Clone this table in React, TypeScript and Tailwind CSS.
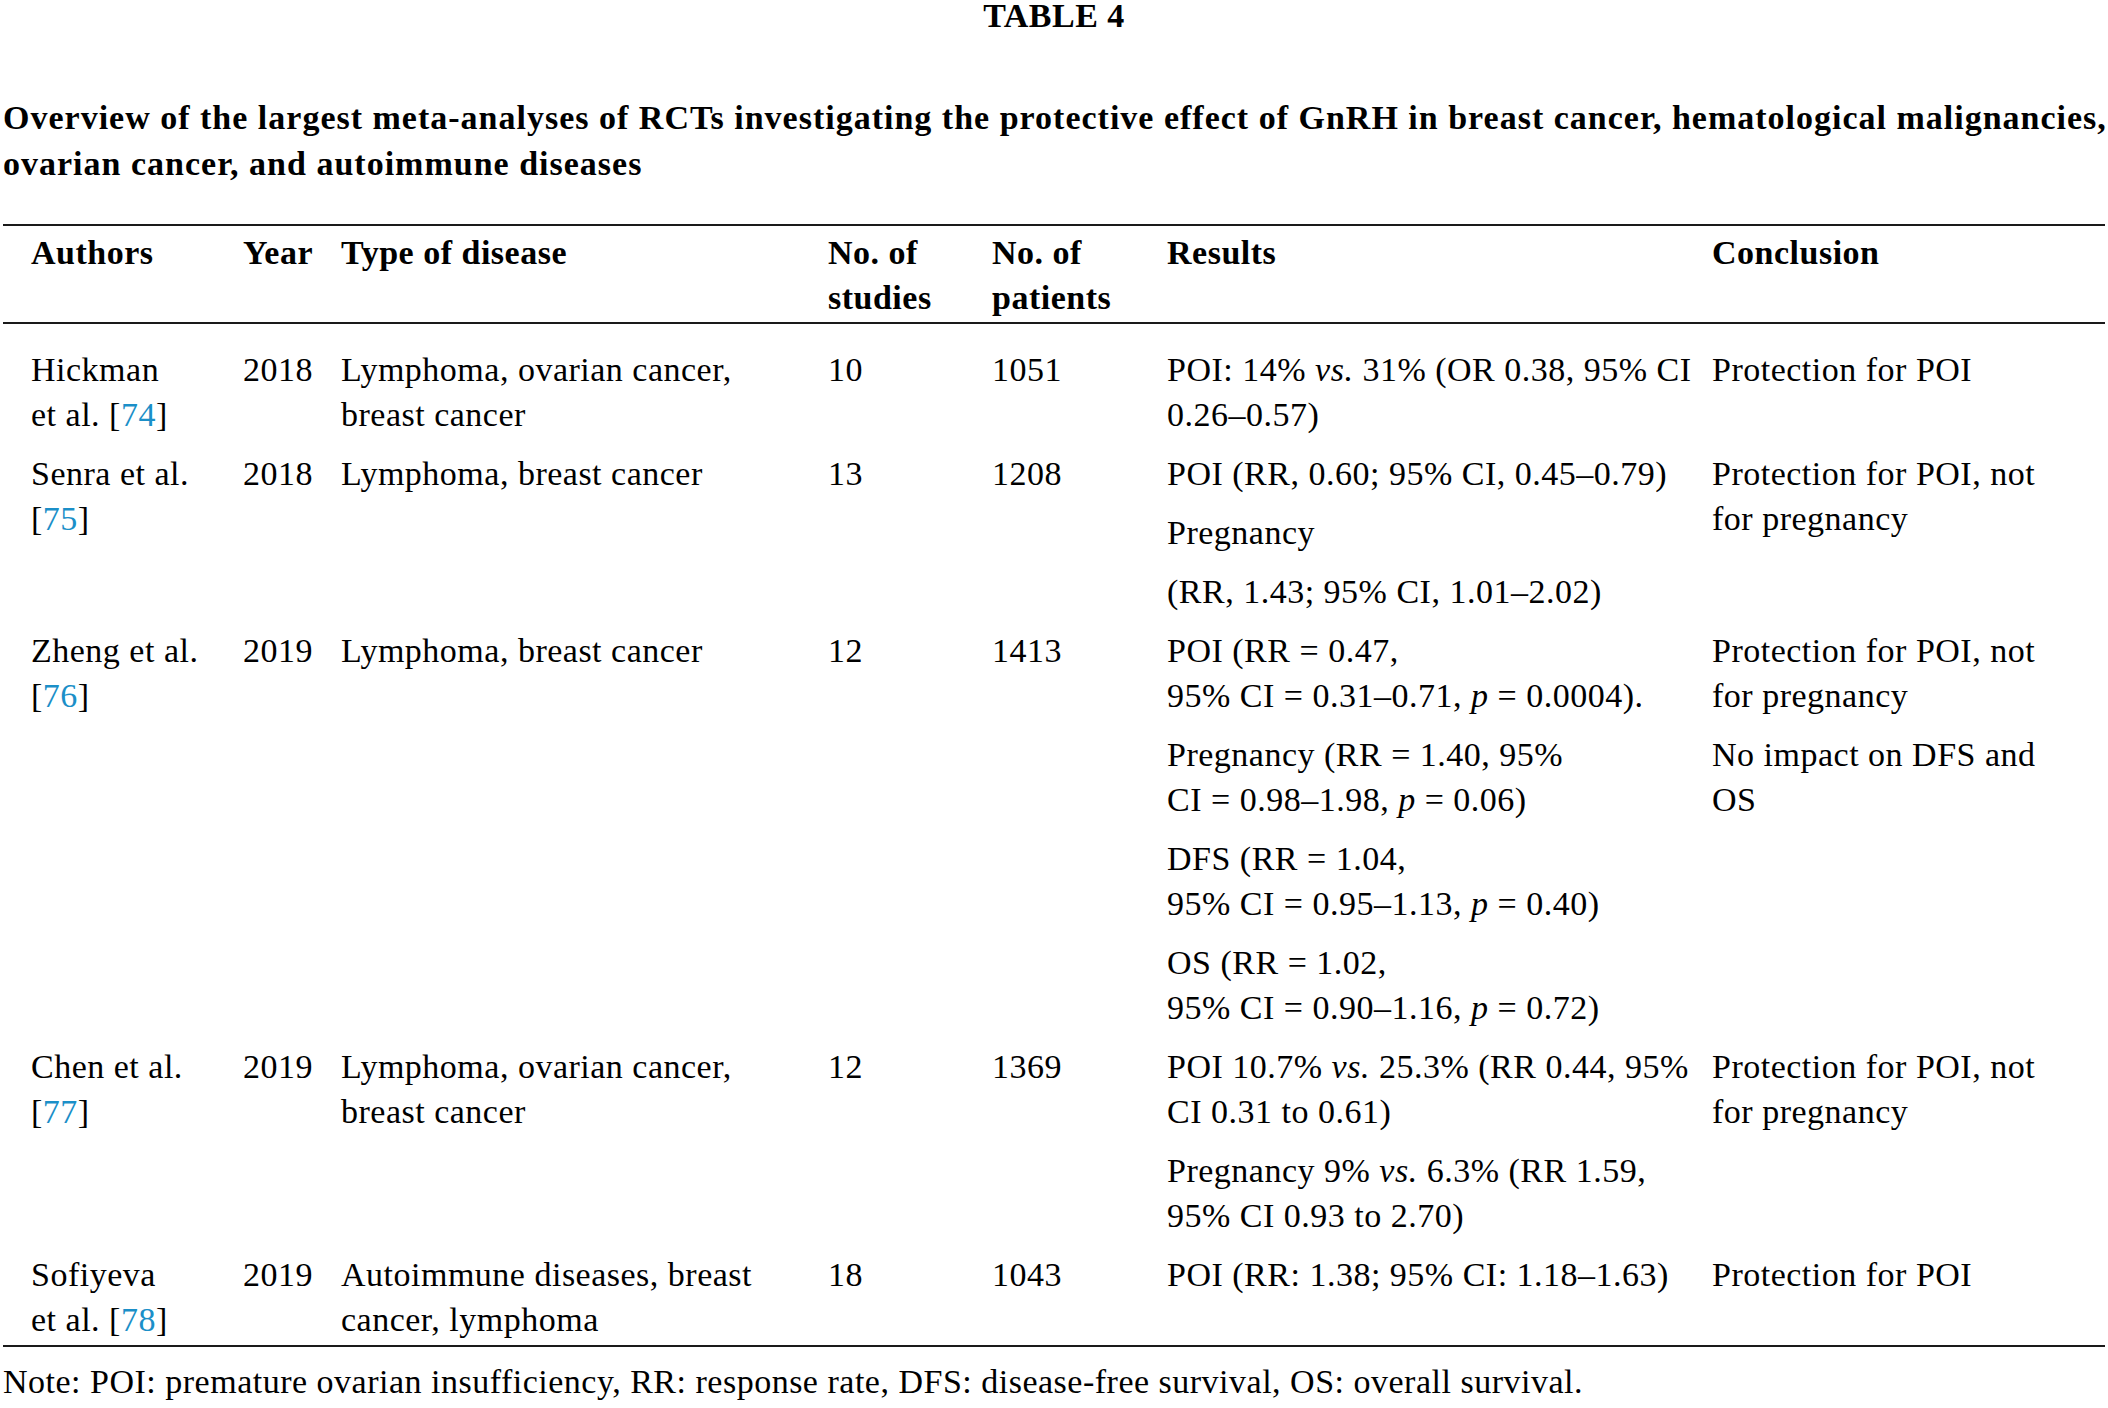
import React from 'react';

type Row = {
  author: React.ReactNode;
  year: string;
  disease: React.ReactNode;
  studies: string;
  patients: string;
  results: React.ReactNode[];
  conclusion: React.ReactNode[];
};

const Ref = ({ n }: { n: number }) => (
  <>
    [<span className="text-[#1b8fc8]">{n}</span>]
  </>
);

const rows: Row[] = [
  {
    author: (
      <>
        Hickman
        <br />
        et al. <Ref n={74} />
      </>
    ),
    year: '2018',
    disease: (
      <>
        Lymphoma, ovarian cancer,
        <br />
        breast cancer
      </>
    ),
    studies: '10',
    patients: '1051',
    results: [
      <>
        POI: 14% <i>vs.</i> 31% (OR 0.38, 95% CI
        <br />
        0.26–0.57)
      </>,
    ],
    conclusion: ['Protection for POI'],
  },
  {
    author: (
      <>
        Senra et al.
        <br />
        <Ref n={75} />
      </>
    ),
    year: '2018',
    disease: 'Lymphoma, breast cancer',
    studies: '13',
    patients: '1208',
    results: ['POI (RR, 0.60; 95% CI, 0.45–0.79)', 'Pregnancy', '(RR, 1.43; 95% CI, 1.01–2.02)'],
    conclusion: [
      <>
        Protection for POI, not
        <br />
        for pregnancy
      </>,
    ],
  },
  {
    author: (
      <>
        Zheng et al.
        <br />
        <Ref n={76} />
      </>
    ),
    year: '2019',
    disease: 'Lymphoma, breast cancer',
    studies: '12',
    patients: '1413',
    results: [
      <>
        POI (RR = 0.47,
        <br />
        95% CI = 0.31–0.71, <i>p</i> = 0.0004).
      </>,
      <>
        Pregnancy (RR = 1.40, 95%
        <br />
        CI = 0.98–1.98, <i>p</i> = 0.06)
      </>,
      <>
        DFS (RR = 1.04,
        <br />
        95% CI = 0.95–1.13, <i>p</i> = 0.40)
      </>,
      <>
        OS (RR = 1.02,
        <br />
        95% CI = 0.90–1.16, <i>p</i> = 0.72)
      </>,
    ],
    conclusion: [
      <>
        Protection for POI, not
        <br />
        for pregnancy
      </>,
      <>
        No impact on DFS and
        <br />
        OS
      </>,
    ],
  },
  {
    author: (
      <>
        Chen et al.
        <br />
        <Ref n={77} />
      </>
    ),
    year: '2019',
    disease: (
      <>
        Lymphoma, ovarian cancer,
        <br />
        breast cancer
      </>
    ),
    studies: '12',
    patients: '1369',
    results: [
      <>
        POI 10.7% <i>vs.</i> 25.3% (RR 0.44, 95%
        <br />
        CI 0.31 to 0.61)
      </>,
      <>
        Pregnancy 9% <i>vs.</i> 6.3% (RR 1.59,
        <br />
        95% CI 0.93 to 2.70)
      </>,
    ],
    conclusion: [
      <>
        Protection for POI, not
        <br />
        for pregnancy
      </>,
    ],
  },
  {
    author: (
      <>
        Sofiyeva
        <br />
        et al. <Ref n={78} />
      </>
    ),
    year: '2019',
    disease: (
      <>
        Autoimmune diseases, breast
        <br />
        cancer, lymphoma
      </>
    ),
    studies: '18',
    patients: '1043',
    results: ['POI (RR: 1.38; 95% CI: 1.18–1.63)'],
    conclusion: ['Protection for POI'],
  },
];

function Stack({ items }: { items: React.ReactNode[] }) {
  return (
    <div className="flex flex-col gap-[14px]">
      {items.map((item, i) => (
        <div key={i} className="whitespace-nowrap">
          {item}
        </div>
      ))}
    </div>
  );
}

export default function App() {
  return (
    <div className="min-h-screen w-[2108px] bg-white px-[3px] font-['Liberation_Serif',serif] text-[34px] tracking-[0.5px] text-black">
      {/* Caption */}
      <div className="text-center font-bold leading-[32px]">TABLE 4</div>
      <div className="mt-[63px] font-bold leading-[46px] tracking-[1px] whitespace-nowrap">
        Overview of the largest meta-analyses of RCTs investigating the protective effect of GnRH in breast cancer, hematological malignancies,
        <br />
        ovarian cancer, and autoimmune diseases
      </div>

      {/* Table */}
      <table className="mt-[37px] w-full table-fixed border-collapse leading-[45px]">
        <colgroup>
          <col className="w-[240px]" />
          <col className="w-[98px]" />
          <col className="w-[487px]" />
          <col className="w-[164px]" />
          <col className="w-[175px]" />
          <col className="w-[545px]" />
          <col className="w-[393px]" />
        </colgroup>
        <thead>
          <tr className="border-y-2 border-[#1a1a1a] text-left align-top font-bold">
            <th className="pl-[28px] pt-[4px] pb-[2px]">Authors</th>
            <th className="pt-[4px] pb-[2px]">Year</th>
            <th className="pt-[4px] pb-[2px]">Type of disease</th>
            <th className="pt-[4px] pb-[2px]">
              No. of
              <br />
              studies
            </th>
            <th className="pt-[4px] pb-[2px]">
              No. of
              <br />
              patients
            </th>
            <th className="pt-[4px] pb-[2px]">Results</th>
            <th className="pt-[4px] pb-[2px]">Conclusion</th>
          </tr>
        </thead>
        <tbody className="border-b-2 border-[#1a1a1a]">
          {rows.map((row, i) => {
            const pad = i === 0 ? 'pt-[23px]' : 'pt-[14px]';
            const bottom = i === rows.length - 1 ? 'pb-[3px]' : 'pb-0';
            return (
              <tr key={i} className="align-top">
                <td className={`pl-[28px] ${pad} ${bottom}`}>{row.author}</td>
                <td className={`${pad} ${bottom}`}>{row.year}</td>
                <td className={`${pad} ${bottom}`}>{row.disease}</td>
                <td className={`${pad} ${bottom}`}>{row.studies}</td>
                <td className={`${pad} ${bottom}`}>{row.patients}</td>
                <td className={`${pad} ${bottom}`}>
                  <Stack items={row.results} />
                </td>
                <td className={`${pad} ${bottom}`}>
                  <Stack items={row.conclusion} />
                </td>
              </tr>
            );
          })}
        </tbody>
      </table>

      <div className="mt-[12px] leading-[45px]">
        Note: POI: premature ovarian insufficiency, RR: response rate, DFS: disease-free survival, OS: overall survival.
      </div>
    </div>
  );
}
